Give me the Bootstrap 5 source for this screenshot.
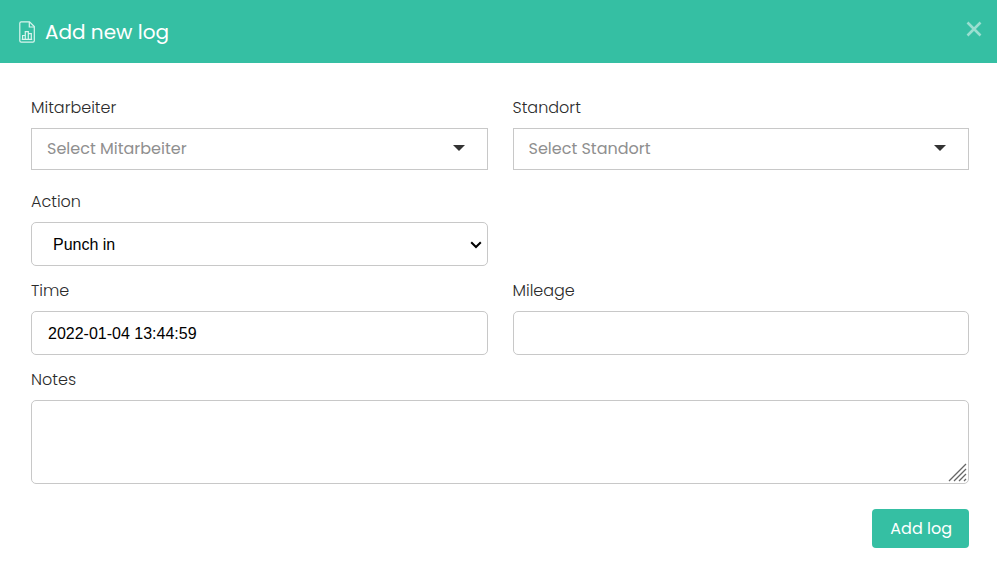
<!DOCTYPE html>
<html lang="de">
<head>
<meta charset="utf-8">
<meta name="viewport" content="width=device-width, initial-scale=1">
<title>Add new log</title>
<link href="https://cdn.jsdelivr.net/npm/bootstrap@5.3.0/dist/css/bootstrap.min.css" rel="stylesheet">
<style>
:root { --brand: #35bfa3; --line: #c8c8c8; }
body { font-family: Poppins, Inter, sans-serif; font-size: 16px; line-height: 24px; color: #2b2b2b; background: #fff; }
.log-header { background: var(--brand); color: #fff; min-height: 63px; padding: 0 15px 0 19px; }
.log-title { font-size: 20px; line-height: 30px; font-weight: 400; margin-left: 10px; }
.log-close { color: #9adfd1; line-height: 0; margin-bottom: 6px; }
.log-body { padding: 33px 28px 28px 31px; }
.log-body .row { --bs-gutter-x: 25px; margin-bottom: 13px; }
.log-body .row.row-picker { margin-bottom: 20px; }
.log-label { display: block; margin-bottom: 8px; font-weight: 300; }
.log-field { border: 1px solid var(--line); border-radius: 5px; background-color: #fff; color: #000; font-family: "Liberation Sans", Arial, sans-serif; font-size: 16px; padding: 10px 16px 8px; height: 44px; }
select.log-field { padding: 2px 16px 0 21px; background: #fff url("data:image/svg+xml,%3Csvg xmlns='http://www.w3.org/2000/svg' width='12' height='8' viewBox='0 0 12 8'%3E%3Cpath d='M1.2 1.2 6 6 10.8 1.2' fill='none' stroke='%23000' stroke-width='2'/%3E%3C/svg%3E") no-repeat right 5px top 18px; appearance: none; }
select.log-picker { height: 42px; border-radius: 0; padding: 0 40px 0 15px; color: #8f8f8f; font-family: Poppins, Inter, sans-serif; background: #fff url("data:image/svg+xml,%3Csvg xmlns='http://www.w3.org/2000/svg' width='12' height='6' viewBox='0 0 12 6'%3E%3Cpath d='M0 0h12L6 6z' fill='%23333'/%3E%3C/svg%3E") no-repeat right 22px top 16px; }
textarea.log-field { display: block; height: 84px; resize: vertical; background: #fff url("data:image/svg+xml,%3Csvg xmlns='http://www.w3.org/2000/svg' width='19' height='19' viewBox='0 0 19 19'%3E%3Cpath d='M1 18 18 1M6 18 18 6M11 18l7-7M16 18l2-2' fill='none' stroke='%23666' stroke-width='1.3'/%3E%3C/svg%3E") no-repeat right 1px bottom 1px; }
textarea.log-field::-webkit-resizer { background: transparent; }
.log-submit { background: var(--brand); color: #fff; border-radius: 4px; padding: 8px 17px 7px 18px; line-height: 24px; border: 0; }
.log-submit:hover { background: #2da88f; color: #fff; }
.log-actions { margin-top: 25px; }
</style>
</head>
<body>
<header class="log-header d-flex align-items-center justify-content-between">
  <div class="d-flex align-items-center">
    <svg width="16" height="22" viewBox="0 0 16 22" fill="none" stroke="#d9f5ee" stroke-width="1.2" aria-hidden="true">
      <path d="M2.2.8H10.500L15.300 5.600V19.800Q15.300 21.200 13.900 21.200H2.200Q.8 21.200.8 19.800V2.200Q.8.8 2.200.8Z"/>
      <path d="M10.300 1V6H15.200M2.800 18.300H13.200M3.600 18.300V14.500H6.300V18.300M6.300 18.300V10.700H9.300V18.300M9.300 12.700H12.300V18.300"/>
    </svg>
    <h1 class="log-title mb-0">Add new log</h1>
  </div>
  <button type="button" class="log-close btn p-0 border-0" aria-label="Close">
    <svg width="16" height="16" viewBox="0 0 16 16" stroke="currentColor" stroke-width="2.600" aria-hidden="true"><path d="M1.500 1.500 14.500 14.500M14.500 1.500 1.500 14.500"/></svg>
  </button>
</header>
<main>
<form class="log-body">
  <div class="row row-picker">
    <div class="col-6">
      <label class="log-label" for="employee">Mitarbeiter</label>
      <select class="log-field log-picker w-100" id="employee"><option>Select Mitarbeiter</option></select>
    </div>
    <div class="col-6">
      <label class="log-label" for="location">Standort</label>
      <select class="log-field log-picker w-100" id="location"><option>Select Standort</option></select>
    </div>
  </div>
  <div class="row">
    <div class="col-6">
      <label class="log-label" for="action">Action</label>
      <select class="log-field w-100" id="action"><option>Punch in</option></select>
    </div>
  </div>
  <div class="row">
    <div class="col-6">
      <label class="log-label" for="time">Time</label>
      <input type="text" class="log-field w-100" id="time" value="2022-01-04 13:44:59">
    </div>
    <div class="col-6">
      <label class="log-label" for="mileage">Mileage</label>
      <input type="text" class="log-field w-100" id="mileage">
    </div>
  </div>
  <label class="log-label" for="notes">Notes</label>
  <textarea class="log-field w-100" id="notes"></textarea>
  <div class="log-actions d-flex justify-content-end">
    <button type="submit" class="log-submit btn">Add log</button>
  </div>
</form>
</main>
<script src="https://cdn.jsdelivr.net/npm/bootstrap@5.3.0/dist/js/bootstrap.bundle.min.js"></script>
</body>
</html>
